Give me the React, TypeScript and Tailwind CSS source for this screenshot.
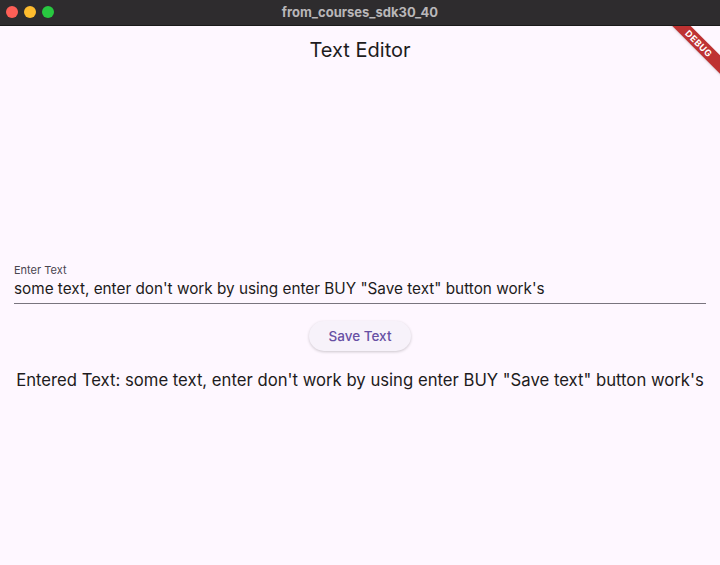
import React, { useState } from "react";

export default function App() {
  const initial = `some text, enter don't work by using enter BUY "Save text" button work's`;
  const [value, setValue] = useState(initial);
  const [saved, setSaved] = useState(initial);

  return (
    <div className="w-[720px] h-[565px] flex flex-col bg-[#fef7ff] overflow-hidden" style={{ fontFamily: "Inter, Roboto, 'Noto Sans', sans-serif" }}>
      {/* window title bar */}
      <div className="relative h-[26px] shrink-0 bg-[#2e2c2e] flex items-center justify-center border-b border-[#1a1a1a]">
        <div className="absolute left-[6px] top-[6px] flex gap-[6px]">
          <div className="w-[12px] h-[12px] rounded-full bg-[#fe5f57]" />
          <div className="w-[12px] h-[12px] rounded-full bg-[#febc2e]" />
          <div className="w-[12px] h-[12px] rounded-full bg-[#28c840]" />
        </div>
        <span className="text-[13px] font-bold text-[#b9b7b9]">from_courses_sdk30_40</span>
      </div>

      <div className="relative flex-1 flex flex-col">
        {/* debug banner */}
        <div className="absolute top-0 right-0 w-[56px] h-[56px] overflow-hidden pointer-events-none">
          <div className="absolute top-[11px] right-[-19px] w-[80px] h-[13px] rotate-45 bg-[#b71c1c]/90 flex items-center justify-center shadow-sm">
            <span className="text-[9px] font-bold text-white tracking-[0.5px]">DEBUG</span>
          </div>
        </div>

        <div className="h-[48px] flex items-center justify-center">
          <h1 className="text-[20px] text-[#1d1b20]">Text Editor</h1>
        </div>

        <div className="px-[14px] pt-[190px]">
          <label className="block text-[11px] text-[#49454f] leading-[12px]">Enter Text</label>
          <input
            value={value}
            onChange={(e) => setValue(e.target.value)}
            className="w-full bg-transparent outline-none text-[15.3px] text-[#1d1b20] leading-[18px] pb-[5px] border-b border-[#79747e]"
          />
        </div>

        <div className="flex justify-center mt-[17px]">
          <button
            onClick={() => setSaved(value)}
            className="h-[30px] w-[102px] rounded-full bg-[#f7f2fa] text-[#6750a4] text-[13.5px] font-medium shadow-[0_1px_3px_rgba(0,0,0,0.2)]"
          >
            Save Text
          </button>
        </div>

        <p className="text-center text-[16.7px] text-[#1d1b20] mt-[17px]">Entered Text: {saved}</p>
      </div>
    </div>
  );
}
